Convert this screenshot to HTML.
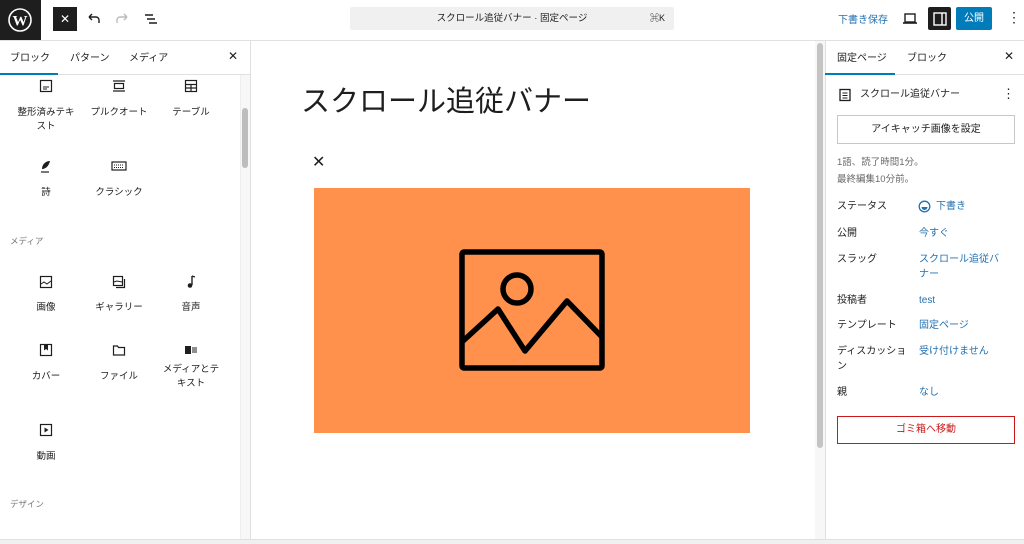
<!DOCTYPE html>
<html><head><meta charset="utf-8"><style>
*{box-sizing:border-box;margin:0;padding:0}
body{width:1024px;height:544px;overflow:hidden;background:#fff;font-family:"Liberation Sans","Noto Sans CJK JP",sans-serif;color:#1e1e1e;position:relative}
.a{position:absolute}
.t{font-size:9.5px;color:#1e1e1e;text-align:center;line-height:14px}
.blue{color:#2271b1}
.lab{position:absolute;left:837px;font-size:10px;line-height:15px}
.val{position:absolute;left:919px;font-size:10px;line-height:15px;color:#2271b1}
svg{position:absolute}
</style></head><body>
<div class="a" style="left:0;top:0;width:1024px;height:41px;border-bottom:1px solid #e0e0e0"></div>
<div class="a" style="left:0;top:0;width:41px;height:40px;background:#1e1e1e"></div>
<svg style="left:8px;top:8px" width="24" height="24" viewBox="0 0 24 24"><circle cx="12" cy="12" r="11" fill="none" stroke="#fff" stroke-width="1.6"/><text x="12" y="17.5" font-size="15" font-family="Liberation Serif" font-weight="bold" fill="#fff" text-anchor="middle">W</text></svg>
<div class="a" style="left:53px;top:7px;width:24px;height:24px;background:#1e1e1e;color:#fff;font-size:12px;text-align:center;line-height:24px">✕</div>
<svg style="left:86px;top:11px" width="16" height="16" viewBox="0 0 16 16"><path d="M3 6h7a3 3 0 0 1 3 3v3M3 6l3-3M3 6l3 3" fill="none" stroke="#1e1e1e" stroke-width="1.4"/></svg>
<svg style="left:114px;top:11px" width="16" height="16" viewBox="0 0 16 16"><path d="M13 6H6a3 3 0 0 0-3 3v3M13 6l-3-3M13 6l-3 3" fill="none" stroke="#bbb" stroke-width="1.4"/></svg>
<svg style="left:143px;top:11px" width="16" height="16" viewBox="0 0 16 16"><path d="M2 4h8M4 8h8M6 12h8" stroke="#1e1e1e" stroke-width="1.4"/></svg>
<div class="a" style="left:350px;top:7px;width:324px;height:23px;background:#f0f0f0;border-radius:2px;font-size:9.5px;line-height:23px;text-align:center;color:#1e1e1e">スクロール追従バナー · 固定ページ</div>
<div class="a" style="left:650px;top:7px;font-size:9px;line-height:23px">⌘K</div>
<div class="a blue" style="left:838px;top:11px;font-size:10px">下書き保存</div>
<svg style="left:902px;top:12px" width="16" height="14" viewBox="0 0 16 14"><rect x="3" y="2" width="10" height="8" fill="none" stroke="#1e1e1e" stroke-width="1.4"/><path d="M1 11h14" stroke="#1e1e1e" stroke-width="1.6"/></svg>
<div class="a" style="left:928px;top:7px;width:23px;height:23px;background:#1e1e1e;border-radius:2px"></div>
<svg style="left:932px;top:11px" width="16" height="16" viewBox="0 0 16 16"><rect x="2" y="2" width="12" height="12" fill="none" stroke="#fff" stroke-width="1.4"/><path d="M10 2v12" stroke="#fff" stroke-width="1.4"/></svg>
<div class="a" style="left:956px;top:7px;width:36px;height:23px;background:#007cba;border-radius:2px;color:#fff;font-size:10px;text-align:center;line-height:23px">公開</div>
<div class="a" style="left:1007px;top:8px;font-size:14px;line-height:18px">⋮</div>
<div class="a" style="left:0;top:41px;width:251px;height:503px;border-right:1px solid #e0e0e0"></div>
<div class="a" style="left:0;top:41px;width:250px;height:34px;border-bottom:1px solid #e0e0e0"></div>
<div class="a" style="left:10px;top:49px;font-size:10px">ブロック</div>
<div class="a" style="left:70px;top:49px;font-size:10px">パターン</div>
<div class="a" style="left:129px;top:49px;font-size:10px">メディア</div>
<div class="a" style="left:228px;top:49px;font-size:12px">✕</div>
<div class="a" style="left:0;top:73px;width:58px;height:2px;background:#007cba"></div>
<div class="a" style="left:240px;top:75px;width:10px;height:465px;background:#f7f7f7;border-left:1px solid #eee"></div>
<div class="a" style="left:242px;top:108px;width:6px;height:60px;background:#bdbdbd;border-radius:3px"></div>
<svg style="left:39px;top:79px" width="14" height="14" viewBox="0 0 14 14"><rect x="1.5" y="1.5" width="11" height="11" fill="none" stroke="#1e1e1e" stroke-width="1.2"/><path d="M4 8h6M4 10h4" stroke="#1e1e1e"/></svg>
<svg style="left:112px;top:79px" width="14" height="14" viewBox="0 0 14 14"><path d="M1 2h12M1 12h12" stroke="#1e1e1e" stroke-width="1.2"/><rect x="2.5" y="4.5" width="9" height="5" fill="none" stroke="#1e1e1e" stroke-width="1.2"/></svg>
<svg style="left:184px;top:79px" width="14" height="14" viewBox="0 0 14 14"><rect x="1.5" y="1.5" width="11" height="11" fill="none" stroke="#1e1e1e" stroke-width="1.2"/><path d="M1.5 5.5h11M1.5 9h11M7 5.5v7" stroke="#1e1e1e" stroke-width="1.2"/></svg>
<div class="a t" style="left:10px;top:106px;width:72px">整形済みテキ<br>スト</div>
<div class="a t" style="left:83px;top:106px;width:72px">プルクオート</div>
<div class="a t" style="left:155px;top:106px;width:72px">テーブル</div>
<svg style="left:39px;top:159px" width="14" height="14" viewBox="0 0 14 14"><path d="M3 10c0-5 4-8 8-8-1 4-3 7-7 8z" fill="#1e1e1e"/><path d="M2 13h8" stroke="#1e1e1e" stroke-width="1.2"/></svg>
<svg style="left:111px;top:161px" width="16" height="10" viewBox="0 0 16 10"><rect x="1" y="1" width="14" height="8" fill="none" stroke="#1e1e1e" stroke-width="1.2"/><path d="M3 4h10M3 6.5h10" stroke="#1e1e1e" stroke-dasharray="1 1"/></svg>
<div class="a t" style="left:10px;top:186px;width:72px">詩</div>
<div class="a t" style="left:83px;top:186px;width:72px">クラシック</div>
<div class="a" style="left:10px;top:235px;font-size:8.5px;color:#757575">メディア</div>
<svg style="left:39px;top:275px" width="14" height="14" viewBox="0 0 14 14"><rect x="1.5" y="1.5" width="11" height="11" fill="none" stroke="#1e1e1e" stroke-width="1.2"/><path d="M2 9l3-2 3 2 4-3" fill="none" stroke="#1e1e1e"/></svg>
<svg style="left:112px;top:275px" width="14" height="14" viewBox="0 0 14 14"><rect x="1.5" y="1.5" width="9" height="9" fill="none" stroke="#1e1e1e" stroke-width="1.2"/><path d="M12.5 4v8.5H4" fill="none" stroke="#1e1e1e" stroke-width="1.2"/><path d="M2 7l3-1 5 1" fill="none" stroke="#1e1e1e"/></svg>
<svg style="left:185px;top:275px" width="12" height="14" viewBox="0 0 12 14"><path d="M7 1v9" stroke="#1e1e1e" stroke-width="1.4"/><path d="M7 1l3 1" stroke="#1e1e1e" stroke-width="1.2"/><circle cx="5" cy="10.5" r="2.3" fill="#1e1e1e"/></svg>
<div class="a t" style="left:10px;top:301px;width:72px">画像</div>
<div class="a t" style="left:83px;top:301px;width:72px">ギャラリー</div>
<div class="a t" style="left:155px;top:301px;width:72px">音声</div>
<svg style="left:39px;top:343px" width="14" height="14" viewBox="0 0 14 14"><rect x="1.5" y="1.5" width="11" height="11" fill="none" stroke="#1e1e1e" stroke-width="1.2"/><path d="M5 1.5h4v6l-2-1.5-2 1.5z" fill="#1e1e1e"/></svg>
<svg style="left:112px;top:343px" width="14" height="14" viewBox="0 0 14 14"><path d="M1.5 3h4l1 1.5h6v7.5h-11z" fill="none" stroke="#1e1e1e" stroke-width="1.2"/></svg>
<svg style="left:184px;top:344px" width="14" height="12" viewBox="0 0 14 12"><rect x="1" y="2" width="6" height="8" fill="#1e1e1e"/><path d="M8 4h5M8 6h5M8 8h5" stroke="#1e1e1e"/></svg>
<div class="a t" style="left:10px;top:370px;width:72px">カバー</div>
<div class="a t" style="left:83px;top:370px;width:72px">ファイル</div>
<div class="a t" style="left:155px;top:363px;width:72px">メディアとテ<br>キスト</div>
<svg style="left:39px;top:423px" width="14" height="14" viewBox="0 0 14 14"><rect x="1.5" y="1.5" width="11" height="11" fill="none" stroke="#1e1e1e" stroke-width="1.2"/><path d="M5.5 4.5v5l4-2.5z" fill="#1e1e1e"/></svg>
<div class="a t" style="left:10px;top:450px;width:72px">動画</div>
<div class="a" style="left:10px;top:498px;font-size:8.5px;color:#757575">デザイン</div>
<div class="a" style="left:815px;top:41px;width:10px;height:503px;background:#f7f7f7"></div>
<div class="a" style="left:817px;top:43px;width:6px;height:405px;background:#c4c4c4;border-radius:3px"></div>
<div class="a" style="left:301px;top:80px;font-size:29px;line-height:44px;color:#1e1e1e">スクロール追従バナー</div>
<div class="a" style="left:312px;top:152px;font-size:16px;line-height:22px">✕</div>
<div class="a" style="left:314px;top:188px;width:436px;height:245px;background:#ff914d"></div>
<svg style="left:455px;top:245px" width="154" height="130" viewBox="0 0 154 130"><rect x="7" y="7" width="140" height="116" fill="none" stroke="#000" stroke-width="5.5" rx="2"/><circle cx="62" cy="44" r="14" fill="none" stroke="#000" stroke-width="5.5"/><path d="M8 96l35-32 27 42 42-50 35 36" fill="none" stroke="#000" stroke-width="5.5" stroke-linejoin="round"/></svg>
<div class="a" style="left:825px;top:41px;width:199px;height:503px;border-left:1px solid #e0e0e0"></div>
<div class="a" style="left:825px;top:41px;width:199px;height:34px;border-bottom:1px solid #e0e0e0"></div>
<div class="a" style="left:837px;top:49px;font-size:10px">固定ページ</div>
<div class="a" style="left:907px;top:49px;font-size:10px">ブロック</div>
<div class="a" style="left:1004px;top:49px;font-size:12px">✕</div>
<div class="a" style="left:825px;top:73px;width:70px;height:2px;background:#007cba"></div>
<svg style="left:838px;top:88px" width="14" height="14" viewBox="0 0 14 14"><rect x="2" y="1.5" width="10" height="11" fill="none" stroke="#1e1e1e" stroke-width="1.3"/><path d="M4.5 5h5M4.5 7.5h5M4.5 10h5" stroke="#1e1e1e"/></svg>
<div class="a" style="left:860px;top:88px;font-size:10px;line-height:14px">スクロール追従バナー</div>
<div class="a" style="left:1002px;top:86px;font-size:13px">⋮</div>
<div class="a" style="left:837px;top:115px;width:178px;height:29px;border:1px solid #c7c7c7;font-size:10px;text-align:center;line-height:27px">アイキャッチ画像を設定</div>
<div class="a" style="left:837px;top:154px;font-size:9.5px;color:#6a6a6a;line-height:17px">1語、読了時間1分。<br>最終編集10分前。</div>
<div class="lab" style="top:199px">ステータス</div>
<svg style="left:918px;top:200px" width="13" height="13" viewBox="0 0 13 13"><circle cx="6.5" cy="6.5" r="5.3" fill="none" stroke="#2271b1" stroke-width="1.3"/><path d="M3.5 7h6a3 3 0 0 1-6 0z" fill="#2271b1"/></svg>
<div class="val" style="left:936px;top:199px">下書き</div>
<div class="lab" style="top:226px">公開</div><div class="val" style="top:226px">今すぐ</div>
<div class="lab" style="top:252px">スラッグ</div><div class="val" style="top:252px">スクロール追従バ<br>ナー</div>
<div class="lab" style="top:293px">投稿者</div><div class="val" style="top:293px">test</div>
<div class="lab" style="top:318px">テンプレート</div><div class="val" style="top:318px">固定ページ</div>
<div class="lab" style="top:344px">ディスカッショ<br>ン</div><div class="val" style="top:344px">受け付けません</div>
<div class="lab" style="top:385px">親</div><div class="val" style="top:385px">なし</div>
<div class="a" style="left:837px;top:416px;width:178px;height:28px;border:1px solid #cc1818;color:#cc1818;font-size:10px;text-align:center;line-height:26px">ゴミ箱へ移動</div>
<div class="a" style="left:0;top:539px;width:1024px;height:5px;background:#f0f0f0;border-top:1px solid #e0e0e0"></div>
</body></html>
